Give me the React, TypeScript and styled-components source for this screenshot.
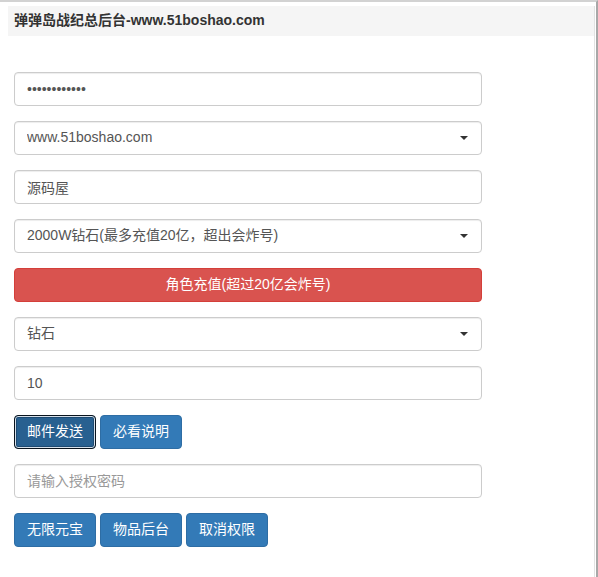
import React from "react";
import styled, { createGlobalStyle } from "styled-components";

const Global = createGlobalStyle`
  html, body { margin: 0; padding: 0; background: #fff; }
  body {
    font-family: "Liberation Sans", "Noto Sans CJK SC", sans-serif;
    font-size: 14px;
    line-height: 1.42857;
    color: #333;
  }
  * { box-sizing: border-box; }
`;

const Frame = styled.div`
  width: 598px;
  height: 577px;
  border-top: 2px solid #d2d2d2;
  border-right: 2px solid #a8a8a8;
  padding: 4px 1px 0 8px;
`;

const Panel = styled.div`
  width: 587px;
  height: 100%;
  border-right: 1px solid #e2e2e2;
`;

const Header = styled.div`
  height: 30px;
  background: #f5f5f5;
  padding-left: 6px;
  display: flex;
  align-items: center;
  font-weight: bold;
  font-size: 14px;
  color: #333;
`;

const Body = styled.div`
  padding: 36px 0 0 6px;
`;

const Form = styled.div`
  width: 468px;
  display: flex;
  flex-direction: column;
  gap: 15px;
`;

const Input = styled.input`
  display: block;
  width: 100%;
  height: 34px;
  padding: 6px 12px;
  font: inherit;
  font-size: 14px;
  color: #555;
  background: #fff;
  border: 1px solid #ccc;
  border-radius: 4px;
  box-shadow: inset 0 1px 1px rgba(0, 0, 0, 0.075);
  outline: none;
  &::placeholder { color: #999; }
`;

const SelectWrap = styled.div`
  position: relative;
  width: 100%;
`;

const Select = styled.select`
  display: block;
  width: 100%;
  height: 34px;
  padding: 6px 12px;
  font: inherit;
  font-size: 14px;
  color: #555;
  background: #fff;
  border: 1px solid #ccc;
  border-radius: 4px;
  box-shadow: inset 0 1px 1px rgba(0, 0, 0, 0.075);
  appearance: none;
  -webkit-appearance: none;
  outline: none;
`;

const Caret = styled.span`
  position: absolute;
  right: 14px;
  top: 15px;
  width: 0;
  height: 0;
  border-left: 4px solid transparent;
  border-right: 4px solid transparent;
  border-top: 4px solid #333;
  pointer-events: none;
`;

const Row = styled.div`
  display: flex;
  gap: 4px;
`;

const Btn = styled.button<{ $variant?: "primary" | "danger"; $focused?: boolean; $block?: boolean }>`
  height: 34px;
  padding: 6px 12px;
  font: inherit;
  font-size: 14px;
  color: #fff;
  border-radius: 4px;
  cursor: pointer;
  white-space: nowrap;
  outline: none;
  width: ${(p) => (p.$block ? "100%" : "auto")};
  background: ${(p) =>
    p.$variant === "danger" ? "#d9534f" : p.$focused ? "#286090" : "#337ab7"};
  border: 1px solid
    ${(p) =>
      p.$variant === "danger" ? "#d43f3a" : p.$focused ? "#0a141e" : "#2e6da4"};
  box-shadow: ${(p) => (p.$focused ? "inset 0 0 0 1px #d6e0ea, inset 0 0 0 2px #1c4a72" : "none")};
`;

const Option = ({ label }: { label: string }) => (
  <SelectWrap>
    <Select defaultValue={label}>
      <option value={label}>{label}</option>
    </Select>
    <Caret />
  </SelectWrap>
);

export default function App() {
  return (
    <>
      <Global />
      <Frame>
        <Panel>
          <Header>弹弹岛战纪总后台-www.51boshao.com</Header>
          <Body>
            <Form>
              <Input type="password" defaultValue="123456789012" />
              <Option label="www.51boshao.com" />
              <Input type="text" defaultValue="源码屋" />
              <Option label="2000W钻石(最多充值20亿，超出会炸号)" />
              <Btn $variant="danger" $block>
                角色充值(超过20亿会炸号)
              </Btn>
              <Option label="钻石" />
              <Input type="text" defaultValue="10" />
              <Row>
                <Btn $variant="primary" $focused>邮件发送</Btn>
                <Btn $variant="primary">必看说明</Btn>
              </Row>
              <Input type="text" placeholder="请输入授权密码" />
              <Row>
                <Btn $variant="primary">无限元宝</Btn>
                <Btn $variant="primary">物品后台</Btn>
                <Btn $variant="primary">取消权限</Btn>
              </Row>
            </Form>
          </Body>
        </Panel>
      </Frame>
    </>
  );
}
